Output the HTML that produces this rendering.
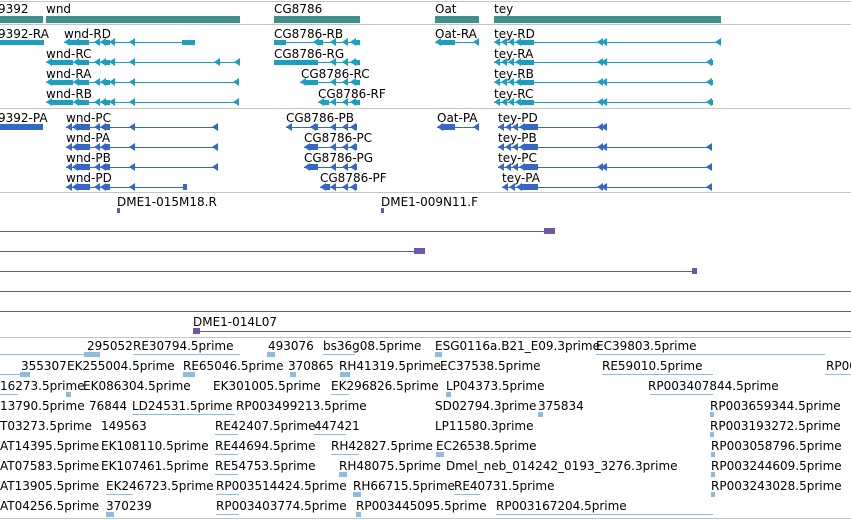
<!DOCTYPE html>
<html><head><meta charset="utf-8"><style>
body{margin:0;width:851px;height:520px;overflow:hidden;background:#fff;position:relative;font-family:"DejaVu Sans","Liberation Sans",sans-serif;font-size:12px;color:#000}
div{position:absolute}
.t{white-space:nowrap;line-height:14px;margin-top:1px}
.s{height:1px;background:#c4c4c4;left:0;width:851px}
.g{background:#3f8f8f;height:7px}
.r{background:#1a9fc0}
.p{background:#3468c8}
.d{background:#6e56a8}
.e{background:#8cbde0}
.tr,.tp{width:0;height:0;border-top:4px solid transparent;border-bottom:4px solid transparent}
.tr{border-right:6px solid #1a9fc0}
.tp{border-right:6px solid #3468c8}
</style></head><body>
<div class="s" style="top:1px"></div>
<div class="s" style="top:24px"></div>
<div class="s" style="top:108px"></div>
<div class="s" style="top:192px"></div>
<div class="s" style="top:337px"></div>
<div class="s" style="top:518px"></div>

<div class="t" style="left:-2px;top:1px">9392</div>
<div class="t" style="left:46px;top:1px">wnd</div>
<div class="t" style="left:274px;top:1px">CG8786</div>
<div class="t" style="left:435px;top:1px">Oat</div>
<div class="t" style="left:494px;top:1px">tey</div>
<div class="g" style="left:0;top:16px;width:43px"></div>
<div class="g" style="left:46px;top:16px;width:194px"></div>
<div class="g" style="left:274px;top:16px;width:86px"></div>
<div class="g" style="left:435px;top:16px;width:44px"></div>
<div class="g" style="left:494px;top:16px;width:227px"></div>

<div class="t" style="left:-2px;top:26px">9392-RA</div>
<div class="t" style="left:64px;top:26px">wnd-RD</div>
<div class="t" style="left:46px;top:46px">wnd-RC</div>
<div class="t" style="left:46px;top:66px">wnd-RA</div>
<div class="t" style="left:46px;top:86px">wnd-RB</div>
<div class="t" style="left:274px;top:26px">CG8786-RB</div>
<div class="t" style="left:274px;top:46px">CG8786-RG</div>
<div class="t" style="left:301px;top:66px">CG8786-RC</div>
<div class="t" style="left:318px;top:86px">CG8786-RF</div>
<div class="t" style="left:435px;top:26px">Oat-RA</div>
<div class="t" style="left:494px;top:26px">tey-RD</div>
<div class="t" style="left:494px;top:46px">tey-RA</div>
<div class="t" style="left:494px;top:66px">tey-RB</div>
<div class="t" style="left:494px;top:86px">tey-RC</div>

<!-- row RD y42 -->
<div class="r" style="left:0;top:40px;width:44px;height:5px"></div>
<div class="r" style="left:64px;top:42px;width:131px;height:1px"></div>
<div class="tr" style="left:64px;top:38px"></div><div class="r" style="left:70px;top:40px;width:8px;height:5px"></div>
<div class="tr" style="left:73px;top:38px"></div><div class="r" style="left:79px;top:40px;width:10px;height:5px"></div>
<div class="tr" style="left:94px;top:38px"></div><div class="tr" style="left:100px;top:38px"></div><div class="r" style="left:106px;top:40px;width:4px;height:5px"></div><div class="tr" style="left:109px;top:38px"></div>
<div class="tr" style="left:129px;top:38px"></div>
<div class="r" style="left:182px;top:40px;width:13px;height:5px"></div>
<div class="r" style="left:274px;top:42px;width:86px;height:1px"></div>
<div class="r" style="left:274px;top:40px;width:12px;height:5px"></div>
<div class="tr" style="left:313px;top:38px"></div><div class="r" style="left:318px;top:40px;width:5px;height:5px"></div>
<div class="tr" style="left:330px;top:38px"></div><div class="tr" style="left:342px;top:38px"></div><div class="tr" style="left:350px;top:38px"></div><div class="r" style="left:355px;top:40px;width:5px;height:5px"></div>
<div class="r" style="left:435px;top:42px;width:44px;height:1px"></div>
<div class="tr" style="left:435px;top:38px"></div><div class="r" style="left:440px;top:40px;width:15px;height:5px"></div><div class="tr" style="left:473px;top:38px"></div>
<div class="r" style="left:494px;top:42px;width:227px;height:1px"></div>

<div class="tr" style="left:494px;top:38px"></div><div class="tr" style="left:501px;top:38px"></div><div class="tr" style="left:508px;top:38px"></div><div class="tr" style="left:515px;top:38px"></div><div class="r" style="left:521px;top:40px;width:13px;height:5px"></div>
<div class="tr" style="left:597px;top:38px"></div><div class="tr" style="left:601px;top:38px"></div><div class="tr" style="left:715px;top:38px"></div>

<!-- wnd rows RC/RA/RB -->
<div class="r" style="left:46px;top:62px;width:194px;height:1px"></div>
<div class="tr" style="left:46px;top:58px"></div><div class="r" style="left:52px;top:60px;width:21px;height:5px"></div>
<div class="tr" style="left:73px;top:58px"></div><div class="r" style="left:79px;top:60px;width:10px;height:5px"></div>
<div class="tr" style="left:94px;top:58px"></div><div class="tr" style="left:100px;top:58px"></div><div class="r" style="left:106px;top:60px;width:4px;height:5px"></div><div class="tr" style="left:109px;top:58px"></div>
<div class="tr" style="left:129px;top:58px"></div><div class="tr" style="left:214px;top:58px"></div><div class="tr" style="left:234px;top:58px"></div>
<div class="r" style="left:46px;top:82px;width:193px;height:1px"></div>
<div class="tr" style="left:46px;top:78px"></div><div class="r" style="left:52px;top:80px;width:21px;height:5px"></div>
<div class="tr" style="left:73px;top:78px"></div><div class="r" style="left:79px;top:80px;width:10px;height:5px"></div>
<div class="tr" style="left:94px;top:78px"></div><div class="tr" style="left:100px;top:78px"></div><div class="r" style="left:106px;top:80px;width:4px;height:5px"></div><div class="tr" style="left:109px;top:78px"></div>
<div class="tr" style="left:129px;top:78px"></div><div class="tr" style="left:233px;top:78px"></div>
<div class="r" style="left:46px;top:102px;width:193px;height:1px"></div>
<div class="tr" style="left:46px;top:98px"></div><div class="r" style="left:52px;top:100px;width:21px;height:5px"></div>
<div class="tr" style="left:73px;top:98px"></div><div class="r" style="left:79px;top:100px;width:10px;height:5px"></div>
<div class="tr" style="left:94px;top:98px"></div><div class="tr" style="left:100px;top:98px"></div><div class="r" style="left:106px;top:100px;width:4px;height:5px"></div><div class="tr" style="left:109px;top:98px"></div>
<div class="tr" style="left:129px;top:98px"></div><div class="tr" style="left:233px;top:98px"></div>

<div class="r" style="left:274px;top:62px;width:86px;height:1px"></div>
<div class="r" style="left:274px;top:60px;width:44px;height:5px"></div>
<div class="tr" style="left:330px;top:58px"></div><div class="tr" style="left:342px;top:58px"></div><div class="tr" style="left:350px;top:58px"></div><div class="r" style="left:355px;top:60px;width:5px;height:5px"></div>
<div class="r" style="left:300px;top:82px;width:60px;height:1px"></div>
<div class="tr" style="left:300px;top:78px"></div><div class="r" style="left:305px;top:80px;width:13px;height:5px"></div>
<div class="tr" style="left:330px;top:78px"></div><div class="tr" style="left:342px;top:78px"></div><div class="tr" style="left:350px;top:78px"></div><div class="r" style="left:355px;top:80px;width:5px;height:5px"></div>
<div class="r" style="left:318px;top:102px;width:42px;height:1px"></div>
<div class="tr" style="left:318px;top:98px"></div><div class="r" style="left:323px;top:100px;width:6px;height:5px"></div>
<div class="tr" style="left:330px;top:98px"></div><div class="tr" style="left:342px;top:98px"></div><div class="tr" style="left:350px;top:98px"></div><div class="r" style="left:355px;top:100px;width:5px;height:5px"></div>

<div class="r" style="left:494px;top:62px;width:219px;height:1px"></div>
<div class="tr" style="left:494px;top:58px"></div><div class="tr" style="left:501px;top:58px"></div><div class="tr" style="left:508px;top:58px"></div><div class="tr" style="left:515px;top:58px"></div><div class="r" style="left:521px;top:60px;width:13px;height:5px"></div>
<div class="tr" style="left:597px;top:58px"></div><div class="tr" style="left:601px;top:58px"></div><div class="tr" style="left:706px;top:58px"></div><div class="r" style="left:710px;top:60px;width:3px;height:5px"></div>
<div class="r" style="left:494px;top:82px;width:219px;height:1px"></div>
<div class="tr" style="left:494px;top:78px"></div><div class="tr" style="left:501px;top:78px"></div><div class="tr" style="left:508px;top:78px"></div><div class="tr" style="left:515px;top:78px"></div><div class="r" style="left:521px;top:80px;width:13px;height:5px"></div>
<div class="tr" style="left:597px;top:78px"></div><div class="tr" style="left:601px;top:78px"></div><div class="tr" style="left:706px;top:78px"></div><div class="r" style="left:710px;top:80px;width:3px;height:5px"></div>
<div class="r" style="left:494px;top:102px;width:219px;height:1px"></div>
<div class="tr" style="left:494px;top:98px"></div><div class="tr" style="left:501px;top:98px"></div><div class="tr" style="left:508px;top:98px"></div><div class="tr" style="left:515px;top:98px"></div><div class="r" style="left:521px;top:100px;width:13px;height:5px"></div>
<div class="tr" style="left:597px;top:98px"></div><div class="tr" style="left:601px;top:98px"></div><div class="tr" style="left:706px;top:98px"></div><div class="r" style="left:710px;top:100px;width:3px;height:5px"></div>

<!-- proteins -->
<div class="t" style="left:-2px;top:110px">9392-PA</div>
<div class="t" style="left:66px;top:110px">wnd-PC</div>
<div class="t" style="left:66px;top:130px">wnd-PA</div>
<div class="t" style="left:66px;top:150px">wnd-PB</div>
<div class="t" style="left:66px;top:170px">wnd-PD</div>
<div class="t" style="left:286px;top:110px">CG8786-PB</div>
<div class="t" style="left:304px;top:130px">CG8786-PC</div>
<div class="t" style="left:304px;top:150px">CG8786-PG</div>
<div class="t" style="left:320px;top:170px">CG8786-PF</div>
<div class="t" style="left:437px;top:110px">Oat-PA</div>
<div class="t" style="left:498px;top:110px">tey-PD</div>
<div class="t" style="left:498px;top:130px">tey-PB</div>
<div class="t" style="left:498px;top:150px">tey-PC</div>
<div class="t" style="left:502px;top:170px">tey-PA</div>

<div class="p" style="left:0;top:124px;width:43px;height:6px"></div>

<div class="p" style="left:66px;top:127px;width:152px;height:1px"></div>
<div class="tp" style="left:66px;top:123px"></div><div class="tp" style="left:72px;top:123px"></div><div class="p" style="left:78px;top:124px;width:12px;height:6px"></div>
<div class="tp" style="left:94px;top:123px"></div><div class="tp" style="left:100px;top:123px"></div><div class="p" style="left:106px;top:124px;width:4px;height:6px"></div>
<div class="tp" style="left:129px;top:123px"></div><div class="tp" style="left:212px;top:123px"></div>
<div class="p" style="left:66px;top:147px;width:152px;height:1px"></div>
<div class="tp" style="left:66px;top:143px"></div><div class="tp" style="left:72px;top:143px"></div><div class="p" style="left:78px;top:144px;width:12px;height:6px"></div>
<div class="tp" style="left:94px;top:143px"></div><div class="tp" style="left:100px;top:143px"></div><div class="p" style="left:106px;top:144px;width:4px;height:6px"></div>
<div class="tp" style="left:129px;top:143px"></div><div class="tp" style="left:212px;top:143px"></div>
<div class="p" style="left:66px;top:167px;width:152px;height:1px"></div>
<div class="tp" style="left:66px;top:163px"></div><div class="tp" style="left:72px;top:163px"></div><div class="p" style="left:78px;top:164px;width:12px;height:6px"></div>
<div class="tp" style="left:94px;top:163px"></div><div class="tp" style="left:100px;top:163px"></div><div class="p" style="left:106px;top:164px;width:4px;height:6px"></div>
<div class="tp" style="left:129px;top:163px"></div><div class="tp" style="left:212px;top:163px"></div>
<div class="p" style="left:66px;top:187px;width:121px;height:1px"></div>
<div class="tp" style="left:66px;top:183px"></div><div class="tp" style="left:72px;top:183px"></div><div class="p" style="left:78px;top:184px;width:12px;height:6px"></div>
<div class="tp" style="left:94px;top:183px"></div><div class="tp" style="left:100px;top:183px"></div><div class="p" style="left:106px;top:184px;width:4px;height:6px"></div>
<div class="tp" style="left:129px;top:183px"></div><div class="p" style="left:183px;top:184px;width:4px;height:6px"></div>

<div class="p" style="left:286px;top:127px;width:71px;height:1px"></div>
<div class="tp" style="left:286px;top:123px"></div><div class="tp" style="left:310px;top:123px"></div><div class="p" style="left:315px;top:124px;width:3px;height:6px"></div>
<div class="tp" style="left:330px;top:123px"></div><div class="tp" style="left:342px;top:123px"></div><div class="tp" style="left:350px;top:123px"></div><div class="p" style="left:355px;top:124px;width:2px;height:6px"></div>
<div class="p" style="left:304px;top:147px;width:53px;height:1px"></div>
<div class="tp" style="left:304px;top:143px"></div><div class="p" style="left:309px;top:144px;width:9px;height:6px"></div>
<div class="tp" style="left:330px;top:143px"></div><div class="tp" style="left:342px;top:143px"></div><div class="tp" style="left:350px;top:143px"></div><div class="p" style="left:355px;top:144px;width:2px;height:6px"></div>
<div class="p" style="left:304px;top:167px;width:53px;height:1px"></div>
<div class="tp" style="left:304px;top:163px"></div><div class="p" style="left:309px;top:164px;width:9px;height:6px"></div>
<div class="tp" style="left:330px;top:163px"></div><div class="tp" style="left:342px;top:163px"></div><div class="tp" style="left:350px;top:163px"></div><div class="p" style="left:355px;top:164px;width:2px;height:6px"></div>
<div class="p" style="left:320px;top:187px;width:37px;height:1px"></div>
<div class="tp" style="left:320px;top:183px"></div><div class="p" style="left:325px;top:184px;width:5px;height:6px"></div>
<div class="tp" style="left:330px;top:183px"></div><div class="tp" style="left:342px;top:183px"></div><div class="tp" style="left:350px;top:183px"></div><div class="p" style="left:355px;top:184px;width:2px;height:6px"></div>

<div class="p" style="left:437px;top:127px;width:42px;height:1px"></div>
<div class="tp" style="left:437px;top:123px"></div><div class="p" style="left:442px;top:124px;width:13px;height:6px"></div><div class="tp" style="left:473px;top:123px"></div>

<div class="p" style="left:498px;top:127px;width:109px;height:1px"></div>
<div class="tp" style="left:498px;top:123px"></div><div class="tp" style="left:505px;top:123px"></div><div class="tp" style="left:512px;top:123px"></div><div class="tp" style="left:519px;top:123px"></div><div class="p" style="left:525px;top:124px;width:13px;height:6px"></div>
<div class="tp" style="left:597px;top:123px"></div><div class="tp" style="left:601px;top:123px"></div>
<div class="p" style="left:498px;top:147px;width:214px;height:1px"></div>
<div class="tp" style="left:498px;top:143px"></div><div class="tp" style="left:505px;top:143px"></div><div class="tp" style="left:512px;top:143px"></div><div class="tp" style="left:519px;top:143px"></div><div class="p" style="left:525px;top:144px;width:13px;height:6px"></div>
<div class="tp" style="left:597px;top:143px"></div><div class="tp" style="left:601px;top:143px"></div><div class="tp" style="left:706px;top:143px"></div>
<div class="p" style="left:498px;top:167px;width:214px;height:1px"></div>
<div class="tp" style="left:498px;top:163px"></div><div class="tp" style="left:505px;top:163px"></div><div class="tp" style="left:512px;top:163px"></div><div class="tp" style="left:519px;top:163px"></div><div class="p" style="left:525px;top:164px;width:13px;height:6px"></div>
<div class="tp" style="left:597px;top:163px"></div><div class="tp" style="left:601px;top:163px"></div><div class="tp" style="left:706px;top:163px"></div>
<div class="p" style="left:502px;top:187px;width:210px;height:1px"></div>
<div class="tp" style="left:502px;top:183px"></div><div class="tp" style="left:509px;top:183px"></div><div class="tp" style="left:516px;top:183px"></div><div class="p" style="left:522px;top:184px;width:16px;height:6px"></div>
<div class="tp" style="left:597px;top:183px"></div><div class="tp" style="left:601px;top:183px"></div><div class="tp" style="left:706px;top:183px"></div>

<!-- DME -->
<div class="t" style="left:117px;top:194px">DME1-015M18.R</div>
<div class="t" style="left:381px;top:194px">DME1-009N11.F</div>
<div class="d" style="left:117px;top:208px;width:3px;height:5px"></div>
<div class="d" style="left:381px;top:208px;width:3px;height:5px"></div>
<div class="d" style="left:0;top:231px;width:545px;height:1px"></div>
<div class="d" style="left:544px;top:228px;width:11px;height:6px"></div>
<div class="d" style="left:0;top:251px;width:415px;height:1px"></div>
<div class="d" style="left:414px;top:248px;width:11px;height:6px"></div>
<div class="d" style="left:0;top:271px;width:693px;height:1px"></div>
<div class="d" style="left:692px;top:268px;width:5px;height:6px"></div>
<div class="d" style="left:0;top:291px;width:851px;height:1px"></div>
<div class="d" style="left:0;top:311px;width:851px;height:1px"></div>
<div class="t" style="left:193px;top:314px">DME1-014L07</div>
<div class="d" style="left:193px;top:331px;width:658px;height:1px"></div>
<div class="d" style="left:193px;top:328px;width:7px;height:6px"></div>

<!-- ESTs -->
<div class="t" style="left:87px;top:338px">295052</div>
<div class="t" style="left:133px;top:338px">RE30794.5prime</div>
<div class="t" style="left:268px;top:338px">493076</div>
<div class="t" style="left:323px;top:338px">bs36g08.5prime</div>
<div class="t" style="left:435px;top:338px">ESG0116a.B21_E09.3prime</div>
<div class="t" style="left:596px;top:338px">EC39803.5prime</div>

<div class="t" style="left:21px;top:358px">355307</div>
<div class="t" style="left:67px;top:358px">EK255004.5prime</div>
<div class="t" style="left:183px;top:358px">RE65046.5prime</div>
<div class="t" style="left:288px;top:358px">370865</div>
<div class="t" style="left:339px;top:358px">RH41319.5prime</div>
<div class="t" style="left:440px;top:358px">EC37538.5prime</div>
<div class="t" style="left:602px;top:358px">RE59010.5prime</div>
<div class="t" style="left:826px;top:358px">RP00</div>

<div class="t" style="left:0;top:378px">16273.5prime</div>
<div class="t" style="left:83px;top:378px">EK086304.5prime</div>
<div class="t" style="left:213px;top:378px">EK301005.5prime</div>
<div class="t" style="left:331px;top:378px">EK296826.5prime</div>
<div class="t" style="left:446px;top:378px">LP04373.5prime</div>
<div class="t" style="left:648px;top:378px">RP003407844.5prime</div>

<div class="t" style="left:0;top:398px">13790.5prime</div>
<div class="t" style="left:89px;top:398px">76844</div>
<div class="t" style="left:132px;top:398px">LD24531.5prime</div>
<div class="t" style="left:236px;top:398px">RP003499213.5prime</div>
<div class="t" style="left:435px;top:398px">SD02794.3prime</div>
<div class="t" style="left:538px;top:398px">375834</div>
<div class="t" style="left:710px;top:398px">RP003659344.5prime</div>

<div class="t" style="left:0;top:418px">T03273.5prime</div>
<div class="t" style="left:101px;top:418px">149563</div>
<div class="t" style="left:215px;top:418px">RE42407.5prime</div>
<div class="t" style="left:314px;top:418px">447421</div>
<div class="t" style="left:435px;top:418px">LP11580.3prime</div>
<div class="t" style="left:710px;top:418px">RP003193272.5prime</div>

<div class="t" style="left:0;top:438px">AT14395.5prime</div>
<div class="t" style="left:101px;top:438px">EK108110.5prime</div>
<div class="t" style="left:215px;top:438px">RE44694.5prime</div>
<div class="t" style="left:331px;top:438px">RH42827.5prime</div>
<div class="t" style="left:436px;top:438px">EC26538.5prime</div>
<div class="t" style="left:711px;top:438px">RP003058796.5prime</div>

<div class="t" style="left:0;top:458px">AT07583.5prime</div>
<div class="t" style="left:101px;top:458px">EK107461.5prime</div>
<div class="t" style="left:215px;top:458px">RE54753.5prime</div>
<div class="t" style="left:339px;top:458px">RH48075.5prime</div>
<div class="t" style="left:446px;top:458px">Dmel_neb_014242_0193_3276.3prime</div>
<div class="t" style="left:711px;top:458px">RP003244609.5prime</div>

<div class="t" style="left:0;top:478px">AT13905.5prime</div>
<div class="t" style="left:106px;top:478px">EK246723.5prime</div>
<div class="t" style="left:216px;top:478px">RP003514424.5prime</div>
<div class="t" style="left:353px;top:478px">RH66715.5prime</div>
<div class="t" style="left:454px;top:478px">RE40731.5prime</div>
<div class="t" style="left:711px;top:478px">RP003243028.5prime</div>

<div class="t" style="left:0;top:498px">AT04256.5prime</div>
<div class="t" style="left:106px;top:498px">370239</div>
<div class="t" style="left:216px;top:498px">RP003403774.5prime</div>
<div class="t" style="left:356px;top:498px">RP003445095.5prime</div>
<div class="t" style="left:496px;top:498px">RP003167204.5prime</div>

<div class="e" style="left:0;top:354px;width:86px;height:1px"></div>
<div class="e" style="left:84px;top:352px;width:16px;height:5px"></div>
<div class="e" style="left:133px;top:354px;width:107px;height:1px"></div>
<div class="e" style="left:267px;top:352px;width:8px;height:5px"></div>
<div class="e" style="left:323px;top:354px;width:32px;height:1px"></div>
<div class="e" style="left:435px;top:352px;width:7px;height:5px"></div>
<div class="e" style="left:596px;top:354px;width:229px;height:1px"></div>
<div class="e" style="left:0;top:374px;width:26px;height:1px"></div>
<div class="e" style="left:20px;top:372px;width:10px;height:5px"></div>
<div class="e" style="left:183px;top:372px;width:12px;height:5px"></div>
<div class="e" style="left:290px;top:372px;width:6px;height:5px"></div>
<div class="e" style="left:340px;top:372px;width:10px;height:5px"></div>
<div class="e" style="left:602px;top:374px;width:111px;height:1px"></div>
<div class="e" style="left:825px;top:374px;width:26px;height:1px"></div>
<div class="e" style="left:0;top:394px;width:18px;height:1px"></div>
<div class="e" style="left:66px;top:392px;width:5px;height:5px"></div>
<div class="e" style="left:331px;top:394px;width:18px;height:1px"></div>
<div class="e" style="left:446px;top:392px;width:5px;height:5px"></div>
<div class="e" style="left:650px;top:394px;width:63px;height:1px"></div>
<div class="e" style="left:132px;top:414px;width:103px;height:1px"></div>
<div class="e" style="left:538px;top:412px;width:5px;height:5px"></div>
<div class="e" style="left:710px;top:412px;width:4px;height:5px"></div>
<div class="e" style="left:314px;top:434px;width:32px;height:1px"></div>
<div class="e" style="left:215px;top:434px;width:23px;height:1px"></div>
<div class="e" style="left:710px;top:432px;width:4px;height:5px"></div>
<div class="e" style="left:331px;top:454px;width:28px;height:1px"></div>
<div class="e" style="left:436px;top:452px;width:8px;height:5px"></div>
<div class="e" style="left:215px;top:454px;width:23px;height:1px"></div>
<div class="e" style="left:711px;top:452px;width:4px;height:5px"></div>
<div class="e" style="left:339px;top:472px;width:8px;height:5px"></div>
<div class="e" style="left:215px;top:474px;width:23px;height:1px"></div>
<div class="e" style="left:711px;top:472px;width:4px;height:5px"></div>
<div class="e" style="left:106px;top:494px;width:27px;height:1px"></div>
<div class="e" style="left:216px;top:494px;width:23px;height:1px"></div>
<div class="e" style="left:353px;top:492px;width:8px;height:5px"></div>
<div class="e" style="left:454px;top:494px;width:26px;height:1px"></div>
<div class="e" style="left:711px;top:492px;width:4px;height:5px"></div>
<div class="e" style="left:106px;top:512px;width:8px;height:5px"></div>
<div class="e" style="left:216px;top:514px;width:23px;height:1px"></div>
<div class="e" style="left:356px;top:512px;width:5px;height:5px"></div>
<div class="e" style="left:496px;top:514px;width:217px;height:1px"></div>
</body></html>
